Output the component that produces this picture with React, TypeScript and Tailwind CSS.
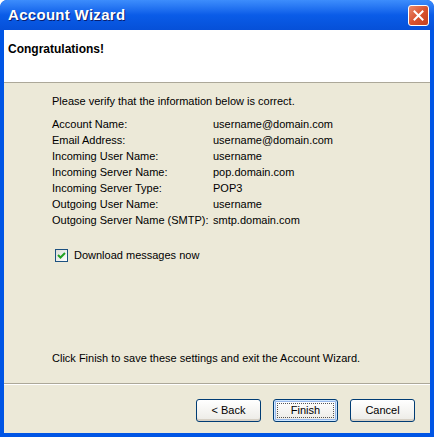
import React from "react";

const rows: [string, string][] = [
  ["Account Name:", "username@domain.com"],
  ["Email Address:", "username@domain.com"],
  ["Incoming User Name:", "username"],
  ["Incoming Server Name:", "pop.domain.com"],
  ["Incoming Server Type:", "POP3"],
  ["Outgoing User Name:", "username"],
  ["Outgoing Server Name (SMTP):", "smtp.domain.com"],
];

function XpButton({ label, primary = false }: { label: string; primary?: boolean }) {
  return (
    <button
      className={`w-[65px] h-[23px] rounded-[3px] border border-[#003c74] bg-gradient-to-b from-[#ffffff] to-[#ecebe6] text-[11px] text-black flex items-center justify-center ${
        primary ? "shadow-[inset_0_0_0_1px_#cee7ff,inset_0_0_0_2px_#98b8ea]" : "shadow-[inset_0_-2px_0_#d6d0c5]"
      }`}
    >
      {primary ? (
        <span className="w-[57px] h-[15px] border border-dotted border-[#555] flex items-center justify-center">
          {label}
        </span>
      ) : (
        label
      )}
    </button>
  );
}

export default function App() {
  return (
    <div
      className="w-[434px] h-[437px] flex flex-col bg-[#0055e5] rounded-t-[7px] px-[4px] pb-[4px] overflow-hidden"
      style={{ fontFamily: '"Liberation Sans", Arial, sans-serif' }}
    >
      {/* title bar */}
      <div className="h-[30px] -mx-[4px] px-[8px] flex items-center justify-between rounded-t-[7px] bg-gradient-to-b from-[#3d8dfc] via-[#0a5ce8] to-[#0650d8]">
        <span className="text-white font-bold text-[15px] tracking-[0.3px] [text-shadow:1px_1px_0_#0a1e6e]">
          Account Wizard
        </span>
        <div className="w-[21px] h-[21px] mr-[-3px] rounded-[3px] border border-white bg-gradient-to-br from-[#e9896c] via-[#d9532f] to-[#c23f1e] flex items-center justify-center">
          <svg width="11" height="11" viewBox="0 0 11 11">
            <path d="M1.5 1.5 L9.5 9.5 M9.5 1.5 L1.5 9.5" stroke="white" strokeWidth="2" strokeLinecap="square" />
          </svg>
        </div>
      </div>

      {/* header */}
      <div className="h-[53px] bg-white border-b border-[#aca899] px-[4px] pt-[10px]">
        <div className="font-bold text-[12px] text-black">Congratulations!</div>
      </div>

      {/* body */}
      <div className="flex-1 flex flex-col bg-[#ece9d8] text-[11px] text-black">
        <div className="flex-1 pl-[48px] pt-[12px] flex flex-col">
          <div className="h-[13px] leading-[13px]">Please verify that the information below is correct.</div>
          <div className="mt-[8px] flex flex-col">
            {rows.map(([label, value]) => (
              <div key={label} className="h-[16px] flex items-center">
                <span className="w-[161px]">{label}</span>
                <span>{value}</span>
              </div>
            ))}
          </div>
          <label className="mt-[19px] ml-[3px] flex items-center gap-[6px]">
            <span className="w-[13px] h-[13px] border border-[#1c5180] bg-gradient-to-br from-[#dcdcd7] to-white flex items-center justify-center">
              <svg width="9" height="9" viewBox="0 0 9 9">
                <path d="M1 4 L3.5 6.5 L8 2" stroke="#21a121" strokeWidth="2" fill="none" />
              </svg>
            </span>
            <span>Download messages now</span>
          </label>
          <div className="mt-auto mb-[17px]">Click Finish to save these settings and exit the Account Wizard.</div>
        </div>
        <div className="border-t border-[#aca899] shadow-[0_1px_0_#ffffff] h-0" />
        <div className="h-[49px] flex items-start justify-end gap-[12px] pr-[15px] pt-[15px]">
          <XpButton label="< Back" />
          <XpButton label="Finish" primary />
          <XpButton label="Cancel" />
        </div>
      </div>
    </div>
  );
}
